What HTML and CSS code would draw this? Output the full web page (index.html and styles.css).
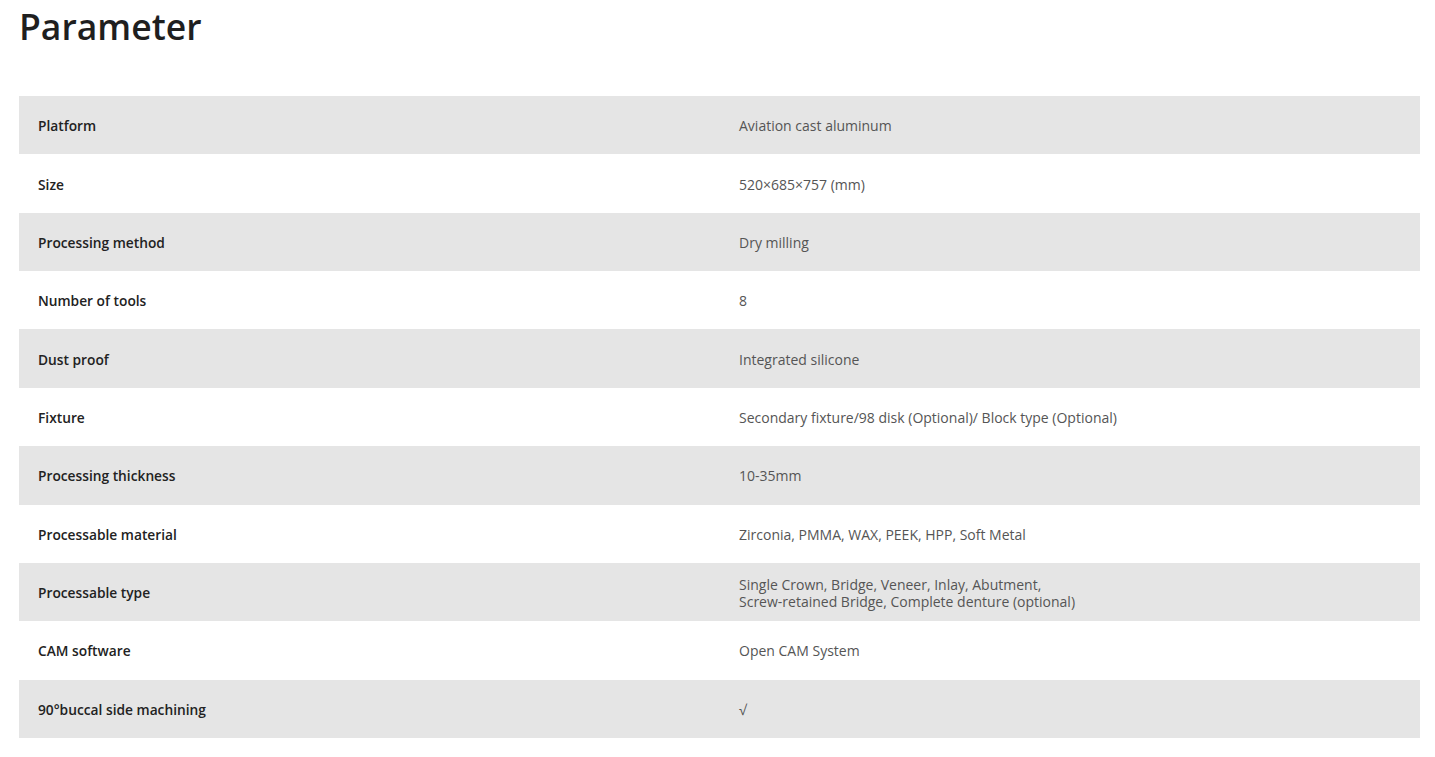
FILE: index.html
```html
<!DOCTYPE html>
<html lang="en">
<head>
<meta charset="utf-8">
<title>Parameter</title>
<link rel="stylesheet" href="styles.css">
</head>
<body>
<main class="page">
  <h1 class="title">Parameter</h1>
  <table class="params">
    <tbody>
      <tr><th>Platform</th><td>Aviation cast aluminum</td></tr>
      <tr><th>Size</th><td>520×685×757 (mm)</td></tr>
      <tr><th>Processing method</th><td>Dry milling</td></tr>
      <tr><th>Number of tools</th><td>8</td></tr>
      <tr><th>Dust proof</th><td>Integrated silicone</td></tr>
      <tr><th>Fixture</th><td>Secondary fixture/98 disk (Optional)/ Block type (Optional)</td></tr>
      <tr><th>Processing thickness</th><td>10-35mm</td></tr>
      <tr><th>Processable material</th><td>Zirconia, PMMA, WAX, PEEK, HPP, Soft Metal</td></tr>
      <tr><th>Processable type</th><td>Single Crown, Bridge, Veneer, Inlay, Abutment,<br>Screw-retained Bridge, Complete denture (optional)</td></tr>
      <tr><th>CAM software</th><td>Open CAM System</td></tr>
      <tr><th>90°buccal side machining</th><td>√</td></tr>
    </tbody>
  </table>
</main>
</body>
</html>
```

FILE: styles.css
```css
html, body {
  margin: 0;
  padding: 0;
  background: #fff;
}
body {
  font-family: "Open Sans", "Noto Sans", "Liberation Sans", sans-serif;
}
.page {
  padding: 0 15px 0 19px;
}
.title {
  margin: 0;
  padding-top: 3px;
  font-size: 35.5px;
  line-height: 46px;
  font-weight: 600;
  color: #1f1f1f;
  letter-spacing: 0;
}
.params {
  margin-top: 47px;
  width: 1401px;
  border-collapse: collapse;
  table-layout: fixed;
}
.params tr {
  height: 58.36px;
}
.params tr:nth-child(odd) {
  background: #e5e5e5;
}
.params th,
.params td {
  width: 50%;
  padding: 1px 19px 0;
  text-align: left;
  vertical-align: middle;
  line-height: 17px;
}
.params th {
  font-size: 13.75px;
  font-weight: 600;
  color: #222;
}
.params td {
  padding-left: 20px;
  font-size: 14px;
  font-weight: 400;
  color: #555;
}
```
